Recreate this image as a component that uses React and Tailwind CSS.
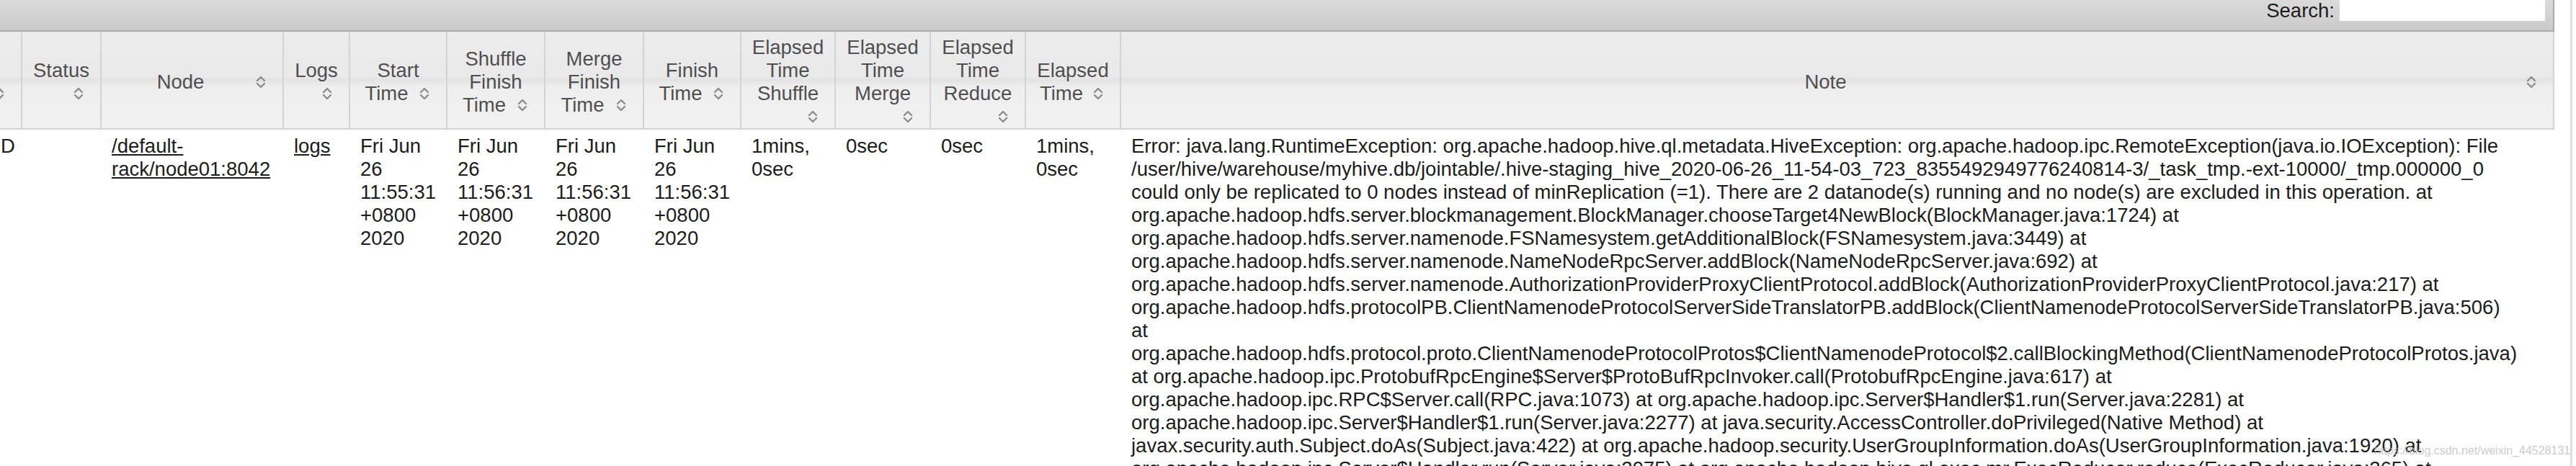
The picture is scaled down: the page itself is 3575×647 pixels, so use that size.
const headers = [
  { lines: ['State'], own: true, left: true },
  { lines: ['Status'], own: true },
  { lines: ['Node'], own: false },
  { lines: ['Logs'], own: true },
  { lines: ['Start', 'Time'], own: false },
  { lines: ['Shuffle', 'Finish', 'Time'], own: false },
  { lines: ['Merge', 'Finish', 'Time'], own: false },
  { lines: ['Finish', 'Time'], own: false },
  { lines: ['Elapsed', 'Time', 'Shuffle'], own: true },
  { lines: ['Elapsed', 'Time', 'Merge'], own: true },
  { lines: ['Elapsed', 'Time', 'Reduce'], own: true },
  { lines: ['Elapsed', 'Time'], own: false },
  { lines: ['Note'], own: false },
]

const widths = [119, 110, 253, 92, 135, 136, 137, 135, 131, 132, 132, 132, 1989]

const note = [
  'Error: java.lang.RuntimeException: org.apache.hadoop.hive.ql.metadata.HiveException: org.apache.hadoop.ipc.RemoteException(java.io.IOException): File',
  '/user/hive/warehouse/myhive.db/jointable/.hive-staging_hive_2020-06-26_11-54-03_723_8355492949776240814-3/_task_tmp.-ext-10000/_tmp.000000_0',
  'could only be replicated to 0 nodes instead of minReplication (=1). There are 2 datanode(s) running and no node(s) are excluded in this operation. at',
  'org.apache.hadoop.hdfs.server.blockmanagement.BlockManager.chooseTarget4NewBlock(BlockManager.java:1724) at',
  'org.apache.hadoop.hdfs.server.namenode.FSNamesystem.getAdditionalBlock(FSNamesystem.java:3449) at',
  'org.apache.hadoop.hdfs.server.namenode.NameNodeRpcServer.addBlock(NameNodeRpcServer.java:692) at',
  'org.apache.hadoop.hdfs.server.namenode.AuthorizationProviderProxyClientProtocol.addBlock(AuthorizationProviderProxyClientProtocol.java:217) at',
  'org.apache.hadoop.hdfs.protocolPB.ClientNamenodeProtocolServerSideTranslatorPB.addBlock(ClientNamenodeProtocolServerSideTranslatorPB.java:506)',
  'at',
  'org.apache.hadoop.hdfs.protocol.proto.ClientNamenodeProtocolProtos$ClientNamenodeProtocol$2.callBlockingMethod(ClientNamenodeProtocolProtos.java)',
  'at org.apache.hadoop.ipc.ProtobufRpcEngine$Server$ProtoBufRpcInvoker.call(ProtobufRpcEngine.java:617) at',
  'org.apache.hadoop.ipc.RPC$Server.call(RPC.java:1073) at org.apache.hadoop.ipc.Server$Handler$1.run(Server.java:2281) at',
  'org.apache.hadoop.ipc.Server$Handler$1.run(Server.java:2277) at java.security.AccessController.doPrivileged(Native Method) at',
  'javax.security.auth.Subject.doAs(Subject.java:422) at org.apache.hadoop.security.UserGroupInformation.doAs(UserGroupInformation.java:1920) at',
  'org.apache.hadoop.ipc.Server$Handler.run(Server.java:2075) at org.apache.hadoop.hive.ql.exec.mr.ExecReducer.reduce(ExecReducer.java:265) at',
]

function SortIcon() {
  return (
    <span className="w-[32px] h-[32px] shrink-0 flex items-center justify-center">
      <svg width="14" height="20" viewBox="0 0 14 20" fill="none" stroke="#8c8c8c" strokeWidth="2.4" strokeLinecap="round" strokeLinejoin="round">
        <path d="M2 8 L7 3 L12 8" />
        <path d="M2 12 L7 17 L12 12" />
      </svg>
    </span>
  )
}

function HeaderCell({ lines, own, left }) {
  const last = lines.length - 1
  return (
    <th className={`align-middle px-[14px] pt-[6px] pb-0 border-r-2 border-b-2 border-[#d3d3d3] font-normal text-[#4f4f4f] bg-[linear-gradient(180deg,#ececec_0%,#e9e9e9_46%,#e3e3e3_50%,#eeeeee_57%,#f1f1f1_100%)] ${left ? 'text-left' : 'text-center'}`}>
      {lines.map((l, i) =>
        i === last && !own ? (
          <div key={i} className="flex items-center">
            <span className="flex-1 text-center whitespace-nowrap">{l}</span>
            <SortIcon />
          </div>
        ) : (
          <div key={i} className="whitespace-nowrap">{l}</div>
        )
      )}
      {own && (
        <div className="flex justify-end">
          <SortIcon />
        </div>
      )}
    </th>
  )
}

function Cell({ children }) {
  return <td className="align-top px-[14px] pt-[7px]">{children}</td>
}

export default function App() {
  return (
    <div className="relative flex h-[647px] overflow-hidden bg-white font-['Liberation_Sans',Arial,sans-serif] text-[27.5px] leading-[32px] text-[#1c1c1c]">
      <div className="w-[3545px] shrink-0 overflow-hidden">
        {/* toolbar */}
        <div className="h-[44px] flex justify-end items-start pr-[11px] border-r-2 border-b-2 border-[#aaaaaa] bg-[linear-gradient(180deg,#dadada,#cacaca)]">
          <span className="-mt-[1px] mr-[7px] whitespace-nowrap">Search:</span>
          <input className="w-[285px] h-[29px] bg-white outline-none" />
        </div>

        <table className="table-fixed border-separate border-spacing-0 ml-[-88px] w-[3633px]">
          <colgroup>
            {widths.map((w, i) => (
              <col key={i} style={{ width: w }} />
            ))}
          </colgroup>
          <thead>
            <tr>
              {headers.map((h, i) => (
                <HeaderCell key={i} {...h} />
              ))}
            </tr>
          </thead>
          <tbody>
            <tr>
              <Cell>FAILED</Cell>
              <Cell></Cell>
              <Cell>
                <a href="#" className="underline">/default-rack/node01:8042</a>
              </Cell>
              <Cell>
                <a href="#" className="underline">logs</a>
              </Cell>
              <Cell>Fri Jun 26 11:55:31 +0800 2020</Cell>
              <Cell>Fri Jun 26 11:56:31 +0800 2020</Cell>
              <Cell>Fri Jun 26 11:56:31 +0800 2020</Cell>
              <Cell>Fri Jun 26 11:56:31 +0800 2020</Cell>
              <Cell>1mins, 0sec</Cell>
              <Cell>0sec</Cell>
              <Cell>0sec</Cell>
              <Cell>1mins, 0sec</Cell>
              <Cell>
                {note.map((l, i) => (
                  <div key={i} className="whitespace-nowrap">{l}</div>
                ))}
              </Cell>
            </tr>
          </tbody>
        </table>
      </div>
      <div className="w-[22px] shrink-0" />
      <div className="w-[3px] shrink-0 bg-[#dddddd]" />
      <div className="flex-1" />

      <div className="absolute left-[3295px] top-[616px] text-[16px] leading-[20px] text-[#bdbdbd]/80 whitespace-nowrap">
        https://blog.csdn.net/weixin_44528131
      </div>
    </div>
  )
}
